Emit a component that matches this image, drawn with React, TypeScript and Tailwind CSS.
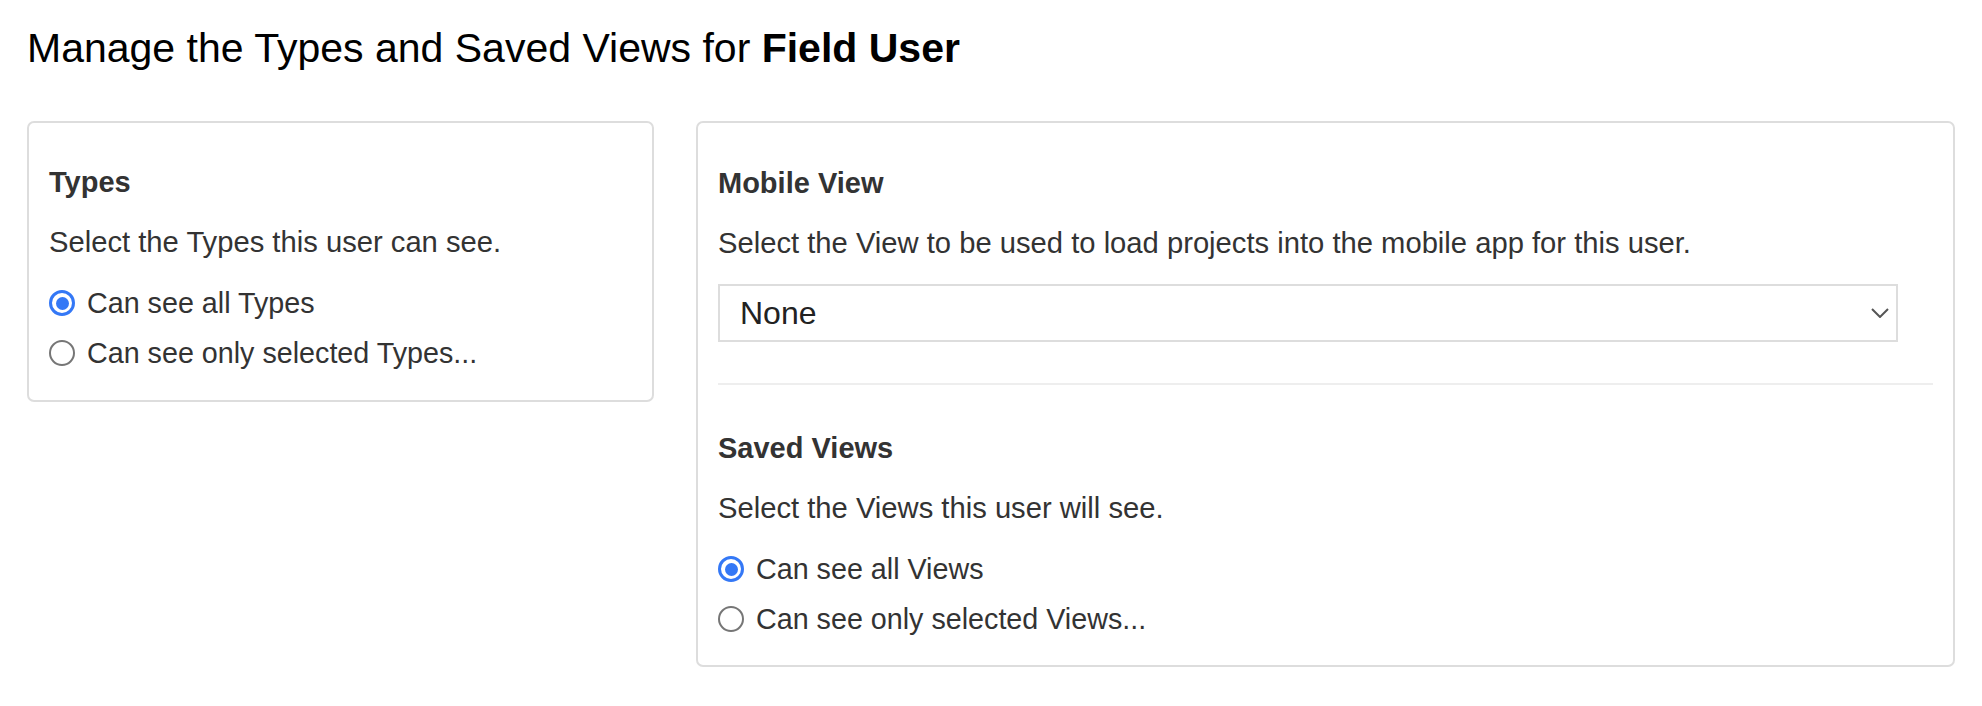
function Radio({ checked, label }: { checked?: boolean; label: string }) {
  return (
    <label className="flex h-[50px] items-center gap-[12px]">
      {checked ? (
        <span className="flex h-[26px] w-[26px] items-center justify-center rounded-full border-[3px] border-[#3478f6] bg-white">
          <span className="h-[13px] w-[13px] rounded-full bg-[#3478f6]" />
        </span>
      ) : (
        <span className="h-[26px] w-[26px] rounded-full border-2 border-[#767676] bg-white" />
      )}
      <span className="text-[28.7px] leading-[34px] text-[#333]">{label}</span>
    </label>
  );
}

function Section({ title, text }: { title: string; text: string }) {
  return (
    <>
      <h3 className="text-[29px] font-bold leading-[34px] text-[#333]">{title}</h3>
      <p className="mt-[26px] text-[29.2px] leading-[34px] text-[#333]">{text}</p>
    </>
  );
}

export default function App() {
  return (
    <div className="min-h-[706px] bg-white px-[27px] pt-[24px] font-['Liberation_Sans',Arial,sans-serif]">
      <h1 className="text-[41px] leading-[48px] text-black">
        Manage the Types and Saved Views for <span className="font-bold">Field User</span>
      </h1>

      <div className="mt-[49px] flex items-start gap-[42px]">
        {/* Types */}
        <div className="w-[627px] shrink-0 rounded-[7px] border-2 border-[#ddd] px-[20px] pt-[42px] pb-[22px]">
          <Section title="Types" text="Select the Types this user can see." />
          <div className="mt-[19px]">
            <Radio checked label="Can see all Types" />
            <Radio label="Can see only selected Types..." />
          </div>
        </div>

        {/* Mobile view + saved views */}
        <div className="flex-1 rounded-[7px] border-2 border-[#ddd] px-[20px] pt-[43px] pb-[21px]">
          <Section
            title="Mobile View"
            text="Select the View to be used to load projects into the mobile app for this user."
          />
          <div className="mt-[24px] mr-[35px] flex h-[58px] items-center justify-between border-2 border-[#ddd] bg-white pl-[20px] pr-[7px]">
            <span className="text-[32px] leading-[38px] text-[#222]">None</span>
            <svg width="18" height="10" viewBox="0 0 18 10" fill="none" stroke="#555" strokeWidth="2">
              <path d="M1 1L9 9L17 1" />
            </svg>
          </div>

          <div className="mt-[41px] mb-[46px] h-[2px] bg-[#eee]" />

          <Section title="Saved Views" text="Select the Views this user will see." />
          <div className="mt-[19px]">
            <Radio checked label="Can see all Views" />
            <Radio label="Can see only selected Views..." />
          </div>
        </div>
      </div>
    </div>
  );
}
